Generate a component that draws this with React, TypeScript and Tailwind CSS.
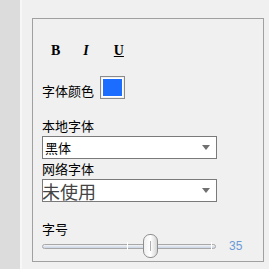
const cjk = "font-['Noto_Sans_CJK_SC','Noto_Sans',sans-serif]";

const Label = ({ text }: { text: string }) => (
	<div className={`${cjk} text-[13px] leading-[16px] text-black`}>{text}</div>
);

const SelectBox = ({ value, big }: { value: string; big?: boolean }) => (
	<div className="flex h-[23px] w-[175px] items-center justify-between overflow-hidden border border-[#7a7a7a] bg-white pr-[6px]">
		<span
			className={
				big
					? `${cjk} -ml-px text-[18px] leading-[20px] text-[#444]`
					: `${cjk} pl-[2px] text-[13px] leading-[16px] text-black`
			}
		>
			{value}
		</span>
		<svg width="8" height="5" viewBox="0 0 8 5">
			<path d="M0 0 L8 0 L4 5 Z" fill="#707070" />
		</svg>
	</div>
);

export default function App() {
	return (
		<div className="flex h-[269px] w-[269px] overflow-hidden bg-[#f0f0f0] leading-none">
			<div className="h-full w-[22px] border-r-2 border-[#f7f7f7] bg-[#dcdcdc]" />
			<div className="ml-[10px] mt-[18px] flex h-[244px] w-[232px] flex-col border border-[#a0a0a0] pl-[9px]">
				<div className="mt-[24px] flex h-[16px] items-center font-['Liberation_Serif',serif] text-[14px] font-bold leading-[16px] text-black">
					<span className="ml-[9px]">B</span>
					<span className="ml-[23px] italic">I</span>
					<span className="ml-[25px] underline">U</span>
				</div>
				<div className="mt-[17px] flex items-end gap-[6px]">
					<Label text="字体颜色" />
					<div className="h-[23px] w-[25px] border border-[#8a8a8a] p-px">
						<div className="h-full w-full border border-white bg-[#1a6dff]" />
					</div>
				</div>
				<div className="mt-[19px]">
					<Label text="本地字体" />
				</div>
				<div className="mt-[2px]">
					<SelectBox value="黑体" />
				</div>
				<div className="mt-[2px]">
					<Label text="网络字体" />
				</div>
				<div className="mt-[2px]">
					<SelectBox value="未使用" big />
				</div>
				<div className="mt-[19px]">
					<Label text="字号" />
				</div>
				<div className="-mt-[3px] flex items-center">
					<div className="relative h-[24px] w-[176px]">
						<div className="absolute left-0 right-[2px] top-[10px] h-[5px] rounded-full border border-[#a8a8a8] bg-gradient-to-b from-[#f4f4f4] to-[#c9d4e4]" />
						<div className="absolute left-[85px] top-[8px] h-[8px] w-px bg-[#ffffff]" />
						<div className="absolute left-[169px] top-[8px] h-[8px] w-px bg-[#ffffff]" />
						<div className="absolute left-[101px] top-0 h-[24px] w-[15px] rounded-[7px] border border-[#8e8e8e] bg-gradient-to-r from-[#f0f0f0] via-[#ffffff] to-[#d6d6d6]">
							<div className="mx-auto mt-[6px] h-[10px] w-px bg-[#b0b0b0]" />
						</div>
					</div>
					<span className="ml-[11px] font-['Liberation_Sans',sans-serif] text-[12px] leading-[14px] text-[#6a9bd6]">
						35
					</span>
				</div>
			</div>
		</div>
	);
}
